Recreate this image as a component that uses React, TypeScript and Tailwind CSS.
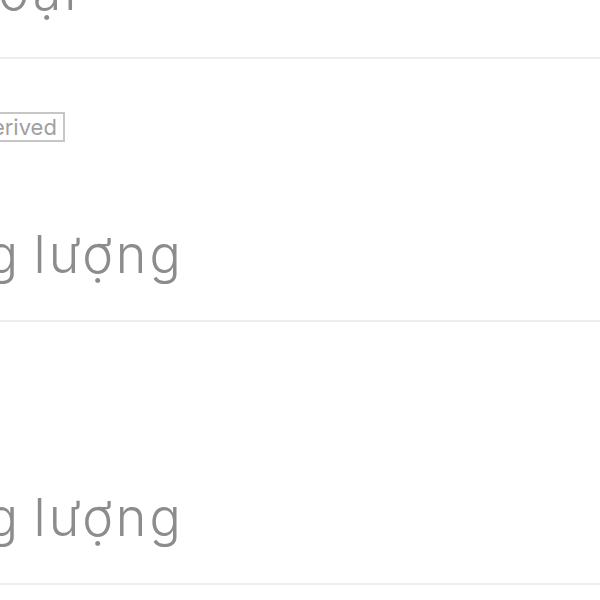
import React from "react";

const rows = [
  { title: "Loại", badge: null as string | null, ml: "-ml-[34px]" },
  { title: "Năng lượng", badge: "Derived", ml: "-ml-[121px]" },
  { title: "Năng lượng", badge: null, ml: "-ml-[121px]" },
];

export default function App() {
  return (
    <div
      className="w-[600px] h-[600px] overflow-hidden bg-white"
      style={{ fontFamily: "Inter, 'Noto Sans', sans-serif" }}
    >
      <div className="-mt-[204px] flex flex-col">
        {rows.map((r, i) => (
          <div key={i} className="h-[263px] border-b-2 border-[#ededed] flex flex-col">
            <div className="h-[53px]" />
            <div className="h-[30px] flex">
              {r.badge && (
                <span className="-ml-[32px] h-[30px] px-[6px] border-2 border-[#c6c6c6] text-[22px] leading-[26px] text-[#a0a0a0] font-normal">
                  {r.badge}
                </span>
              )}
            </div>
            <div className="flex-1 flex items-end pb-[37px]">
              <span
                className={`${r.ml} text-[52px] leading-[56px] font-light tracking-[3px] [word-spacing:-5px] text-[#8c8c8c] whitespace-nowrap`}
              >
                {r.title}
              </span>
            </div>
          </div>
        ))}
      </div>
    </div>
  );
}
